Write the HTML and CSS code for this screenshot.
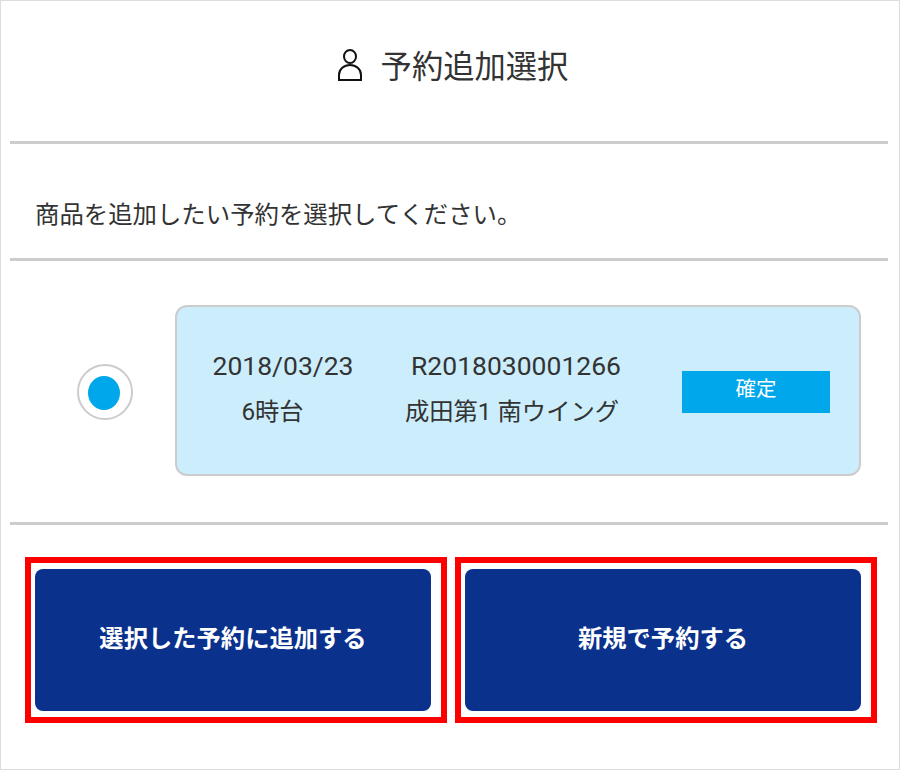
FILE: index.html
```html
<!DOCTYPE html>
<html lang="ja">
<head>
    <meta charset="UTF-8">
    <title>予約追加選択</title>
    <link rel="stylesheet" href="styles.css">
</head>
<body>
    <div class="screen">
        <header class="title-row">
            <svg class="user-icon" width="26" height="34" viewBox="0 0 26 34" fill="none" stroke="#111" stroke-width="2">
                <ellipse cx="13" cy="8.5" rx="6" ry="6.5"/>
                <path d="M2 32v-5c0-6 5-10 11-10s11 4 11 10v5z"/>
            </svg>
            <h1>予約追加選択</h1>
        </header>
        <p class="lead">商品を追加したい予約を選択してください。</p>
        <section class="booking-row">
            <div class="radio"><span></span></div>
            <div class="card">
                <div class="col-date">
                    <div class="line-num">2018/03/23</div>
                    <div class="line-jp">6時台</div>
                </div>
                <div class="col-place">
                    <div class="line-num">R2018030001266</div>
                    <div class="line-jp">成田第1 南ウイング</div>
                </div>
                <div class="status">確定</div>
            </div>
        </section>
        <div class="actions">
            <div class="mark"><button>選択した予約に追加する</button></div>
            <div class="mark"><button>新規で予約する</button></div>
        </div>
    </div>
</body>
</html>
```

FILE: styles.css
```css
* {
    box-sizing: border-box;
}

body {
    margin: 0;
    background: #fff;
    color: #333;
    font-family: Roboto, "Noto Sans CJK JP", sans-serif;
}

.screen {
    width: 900px;
    height: 770px;
    padding: 0 11px 0 9px;
    border: 1px solid #ddd;
}

.title-row {
    height: 143px;
    display: flex;
    align-items: center;
    justify-content: center;
    gap: 18px;
    padding: 0 0 13px 7px;
    border-bottom: 3px solid #ccc;
}

h1 {
    margin: 0;
    font-size: 31.3px;
    font-weight: 400;
    color: #333;
}

.lead {
    margin: 0;
    height: 117px;
    padding: 56px 0 0 25px;
    font-size: 24.4px;
    line-height: 30px;
    border-bottom: 3px solid #ccc;
}

.booking-row {
    height: 264px;
    display: flex;
    align-items: center;
    padding: 0 27px 0 67px;
    border-bottom: 3px solid #ccc;
}

.radio {
    width: 56px;
    height: 56px;
    margin-right: 42px;
    border: 2px solid #ccc;
    border-radius: 50%;
    display: flex;
    align-items: center;
    justify-content: center;
}

.radio span {
    width: 32px;
    height: 34px;
    margin: 3px 2px 0 0;
    border-radius: 50%;
    background: #00a7ea;
}

.card {
    flex: 1;
    height: 171px;
    margin-bottom: 2px;
    padding-bottom: 3px;
    display: flex;
    align-items: center;
    background: #cceefc;
    border: 2px solid #ccc;
    border-radius: 12px;
    line-height: 46px;
    text-align: center;
}

.line-num {
    font-size: 26.5px;
}

.line-jp {
    font-size: 24.3px;
}

.col-date {
    width: 190px;
    margin-left: 11px;
}

.col-date .line-jp {
    padding-right: 21px;
}

.col-place {
    width: 240px;
    margin-left: 18px;
}

.col-place .line-jp {
    padding-right: 8px;
}

.status {
    width: 148px;
    height: 42px;
    margin-left: 46px;
    margin-top: 5px;
    background: #00a7ea;
    color: #fff;
    font-size: 20.5px;
    line-height: 36px;
}

.actions {
    display: flex;
    justify-content: space-between;
    padding: 32px 11px 0 15px;
}

.mark {
    width: 422px;
    height: 166px;
    padding: 6px 10px 6px 4px;
    border: 6px solid #f00;
}

button {
    width: 100%;
    height: 100%;
    padding: 0 0 7px;
    border: 0;
    border-radius: 8px;
    background: #0a318c;
    color: #fff;
    font-family: inherit;
    font-size: 24.3px;
    font-weight: 700;
}
```
